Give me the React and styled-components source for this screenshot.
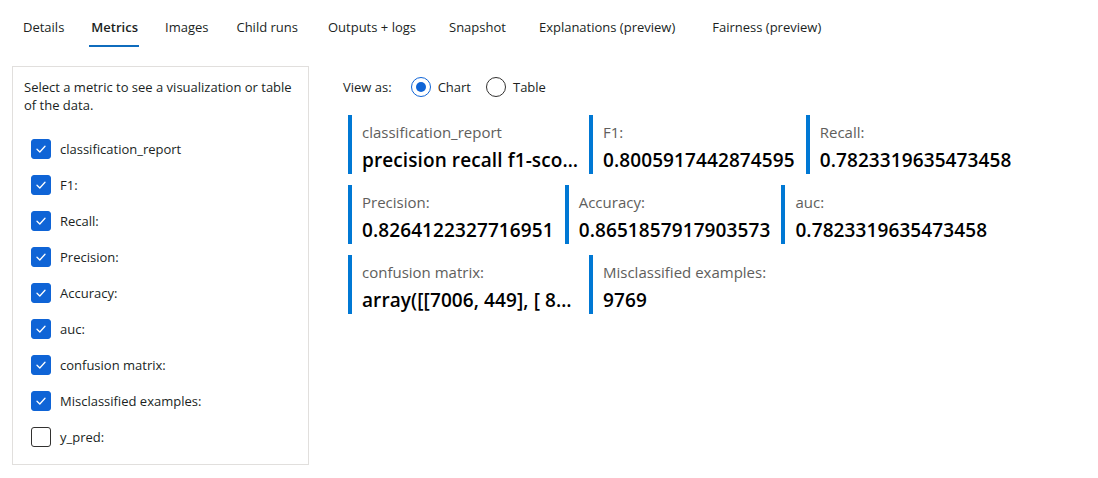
import React, { useState } from 'react'
import styled, { createGlobalStyle } from 'styled-components'

const GlobalStyle = createGlobalStyle`
  body {
    margin: 0;
    background: #ffffff;
    font-family: "Segoe UI", "Open Sans", sans-serif;
    font-size: 13px;
    color: #201f1e;
  }
`

const TabBar = styled.div`
  display: flex;
  padding-left: 23px;
  height: 48px;
`
const Tab = styled.div`
  position: relative;
  display: flex;
  align-items: center;
  height: 100%;
  padding-top: 6px;
  box-sizing: border-box;
  margin-left: ${p => p.gap}px;
  font-weight: ${p => (p.active ? 600 : 400)};
  color: #201f1e;
  cursor: pointer;

  &::after {
    content: '';
    display: ${p => (p.active ? 'block' : 'none')};
    position: absolute;
    left: -2px;
    right: -1px;
    bottom: 1px;
    height: 2px;
    background: #0f6cbd;
  }
`

const Body = styled.div`
  display: flex;
  align-items: flex-start;
  margin-top: 18px;
  padding-left: 12px;
`

const MetricPanel = styled.div`
  width: 297px;
  box-sizing: border-box;
  border: 1px solid #e1dfdd;
  padding: 11px 11px 9px 11px;
`
const Hint = styled.div`
  line-height: 18px;
`
const CheckList = styled.div`
  margin-top: 17px;
  padding-left: 7px;
`
const CheckRow = styled.label`
  display: flex;
  align-items: center;
  gap: 9px;
  height: 36px;
  cursor: pointer;
`
const Box = styled.span`
  width: 20px;
  height: 20px;
  box-sizing: border-box;
  border-radius: 3px;
  display: flex;
  align-items: center;
  justify-content: center;
  background: ${p => (p.checked ? '#0f64d6' : '#ffffff')};
  border: 1px solid ${p => (p.checked ? '#0f64d6' : '#323130')};
`

const Viewer = styled.div`
  margin-left: 34px;
  flex: 1;
`
const ViewAs = styled.div`
  display: flex;
  align-items: center;
  height: 20px;
  margin-top: 11px;
`
const ViewLabel = styled.span`
  margin-right: 19px;
`
const RadioOption = styled.label`
  display: flex;
  align-items: center;
  gap: 7px;
  margin-right: 15px;
  cursor: pointer;
`
const RadioCircle = styled.span`
  width: 20px;
  height: 20px;
  box-sizing: border-box;
  border-radius: 50%;
  border: 1px solid ${p => (p.checked ? '#0f64d6' : '#323130')};
  display: flex;
  align-items: center;
  justify-content: center;

  &::after {
    content: '';
    display: ${p => (p.checked ? 'block' : 'none')};
    width: 10px;
    height: 10px;
    border-radius: 50%;
    background: #0f64d6;
  }
`

const Cards = styled.div`
  display: flex;
  flex-wrap: wrap;
  column-gap: 11px;
  row-gap: 11px;
  margin-top: 18px;
  padding-left: 5px;
  max-width: 700px;
`
const Card = styled.div`
  height: 59px;
  box-sizing: border-box;
  border-left: 4px solid #0078d4;
  padding: 7px 0 0 10px;
  display: flex;
  flex-direction: column;
  max-width: 230px;
`
const CardLabel = styled.div`
  font-size: 15px;
  line-height: 20px;
  color: #605e5c;
  white-space: nowrap;
`
const CardValue = styled.div`
  margin-top: 5px;
  font-size: 19px;
  font-weight: 600;
  line-height: 26px;
  letter-spacing: 0.1px;
  color: #000000;
  white-space: nowrap;
  overflow: hidden;
  text-overflow: ellipsis;
`

const tabs = ['Details', 'Metrics', 'Images', 'Child runs', 'Outputs + logs', 'Snapshot', 'Explanations (preview)', 'Fairness (preview)']
const tabGaps = [0, 27, 27, 28, 30, 33, 33, 37]

const metrics = [
  { name: 'classification_report', value: 'precision recall f1-score support 0 0.90 0.94 0.92 7455' },
  { name: 'F1:', value: '0.8005917442874595' },
  { name: 'Recall:', value: '0.7823319635473458' },
  { name: 'Precision:', value: '0.8264122327716951' },
  { name: 'Accuracy:', value: '0.8651857917903573' },
  { name: 'auc:', value: '0.7823319635473458' },
  { name: 'confusion matrix:', value: 'array([[7006, 449], [ 866, 1448]])' },
  { name: 'Misclassified examples:', value: '9769' },
  { name: 'y_pred:', value: '' },
]

function Check() {
  return (
    <svg width="12" height="12" viewBox="0 0 12 12" fill="none">
      <path d="M2 6.3 L4.8 9 L10 3.2" stroke="#ffffff" strokeWidth="1.3" strokeLinecap="round" strokeLinejoin="round" />
    </svg>
  )
}

export default function App() {
  const [selected, setSelected] = useState(metrics.map(m => m.name !== 'y_pred:'))
  const [view, setView] = useState('chart')

  const toggle = i => setSelected(s => s.map((v, j) => (j === i ? !v : v)))

  return (
    <>
      <GlobalStyle />
      <TabBar>
        {tabs.map((t, i) => (
          <Tab key={t} active={t === 'Metrics'} gap={tabGaps[i]}>{t}</Tab>
        ))}
      </TabBar>
      <Body>
        <MetricPanel>
          <Hint>Select a metric to see a visualization or table of the data.</Hint>
          <CheckList>
            {metrics.map((m, i) => (
              <CheckRow key={m.name} onClick={() => toggle(i)}>
                <Box checked={selected[i]}>{selected[i] && <Check />}</Box>
                {m.name}
              </CheckRow>
            ))}
          </CheckList>
        </MetricPanel>
        <Viewer>
          <ViewAs>
            <ViewLabel>View as:</ViewLabel>
            <RadioOption onClick={() => setView('chart')}>
              <RadioCircle checked={view === 'chart'} />
              Chart
            </RadioOption>
            <RadioOption onClick={() => setView('table')}>
              <RadioCircle checked={view === 'table'} />
              Table
            </RadioOption>
          </ViewAs>
          <Cards>
            {metrics.filter((m, i) => selected[i]).map(m => (
              <Card key={m.name}>
                <CardLabel>{m.name}</CardLabel>
                <CardValue>{m.value}</CardValue>
              </Card>
            ))}
          </Cards>
        </Viewer>
      </Body>
    </>
  )
}
